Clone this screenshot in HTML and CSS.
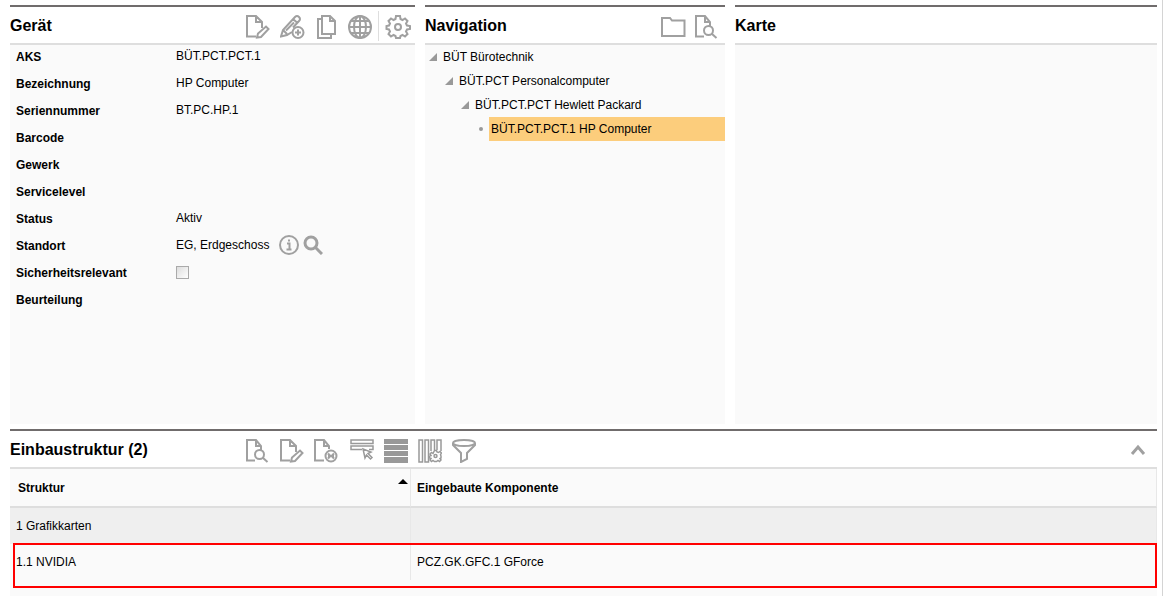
FILE: index.html
```html
<!DOCTYPE html>
<html lang="de">
<head>
    <meta charset="UTF-8">
    <meta name="viewport" content="width=device-width, initial-scale=1.0">
    <title>Gerät</title>
    <link rel="stylesheet" href="styles.css">
</head>
<body>
    <!-- Wiederverwendete Symbole -->
    <svg class="symbols" aria-hidden="true">
        <symbol id="page-search" viewBox="0 0 26 24">
            <path d="M9 21.500H1V1h9l5 6v4M10 1v6h5"/>
            <circle cx="13.500" cy="15.500" r="4.500"/>
            <path d="M16.500 18.500l5 4.500"/>
        </symbol>
        <symbol id="page-edit" viewBox="0 0 26 24">
            <path d="M10 21.500H1V1h9l6 6v6M10 1v6h6M11 22.500l1-4 8-7 2.500 2.500-7.500 8z"/>
        </symbol>
    </svg>

    <div class="page">
        <div class="panels">
            <section class="panel">
                <div class="panel-header">
                    <h2>Gerät</h2>
                    <div class="toolbar device-toolbar">
                        <button type="button" class="icon-button" aria-label="Bearbeiten"><svg><use href="#page-edit"/></svg></button>
                        <button type="button" class="icon-button" aria-label="Neu">
                            <svg viewBox="0 0 26 24"><path d="M12 17l-5 3-6 1.500L3 15 15 2q2-2 4 0t0 4l-6 6.500M3 15l4 4M13 4l4.500 4M14 7.500l-8 8"/><circle cx="18" cy="17.500" r="5.500"/><path d="M15 17.500h6M18 14.500v6"/></svg>
                        </button>
                        <button type="button" class="icon-button" aria-label="Kopieren">
                            <svg viewBox="0 0 26 24"><path d="M8 1h8l5 5v13H8zM16 1v5h5M7 4H4v19h13v-3"/></svg>
                        </button>
                        <button type="button" class="icon-button" aria-label="Web">
                            <svg viewBox="0 0 26 24"><circle cx="12" cy="12" r="11"/><ellipse cx="12" cy="12" rx="6" ry="11"/><path d="M12 1v22M1 12h22M3 6h18M3 18h18"/></svg>
                        </button>
                        <button type="button" class="icon-button settings" aria-label="Einstellungen">
                            <svg viewBox="0 0 26 24"><circle cx="13" cy="12" r="3"/><path d="M11 1h4l.5 3 2 1L20 3.500 22.500 6 21 8.500l1 2 3 .5v3l-3 .5-1 2 1.500 2.500L20 21.500 17.500 20l-2 1-.5 2h-4l-.5-2-2-1L6 21.500 3.500 19 5 16.500l-1-2-2.500-.5v-3l2.500-.5 1-2L3.500 6 6 3.500 8.500 5l2-1z"/></svg>
                        </button>
                    </div>
                </div>
                <div class="panel-body">
                    <div class="field"><span class="name">AKS</span><span>BÜT.PCT.PCT.1</span></div>
                    <div class="field"><span class="name">Bezeichnung</span><span>HP Computer</span></div>
                    <div class="field"><span class="name">Seriennummer</span><span>BT.PC.HP.1</span></div>
                    <div class="field"><span class="name">Barcode</span></div>
                    <div class="field"><span class="name">Gewerk</span></div>
                    <div class="field"><span class="name">Servicelevel</span></div>
                    <div class="field"><span class="name">Status</span><span>Aktiv</span></div>
                    <div class="field">
                        <span class="name">Standort</span>
                        <span class="location">EG, Erdgeschoss</span>
                        <button type="button" class="small-button" aria-label="Info">
                            <svg viewBox="0 0 20 20"><circle cx="10" cy="10" r="9"/><path d="M8 8.500h2.500V14M7.500 14.500h5M9 5.500h2"/></svg>
                        </button>
                        <button type="button" class="small-button" aria-label="Suchen">
                            <svg class="bold" viewBox="0 0 20 20"><circle cx="8" cy="8" r="6"/><path d="M12 12l7 7"/></svg>
                        </button>
                    </div>
                    <div class="field"><label class="name" for="safety">Sicherheitsrelevant</label><input type="checkbox" id="safety"></div>
                    <div class="field"><span class="name">Beurteilung</span></div>
                </div>
            </section>

            <section class="panel">
                <div class="panel-header">
                    <h2>Navigation</h2>
                    <div class="toolbar">
                        <button type="button" class="icon-button" aria-label="Ordner">
                            <svg viewBox="0 0 26 24"><path d="M1 3h8l2 2.500h12.500V21H1z"/></svg>
                        </button>
                        <button type="button" class="icon-button" aria-label="Anzeigen"><svg><use href="#page-search"/></svg></button>
                    </div>
                </div>
                <div class="panel-body">
                    <ul class="tree">
                        <li><div class="node"><span class="arrow"></span>BÜT Bürotechnik</div>
                            <ul>
                                <li><div class="node"><span class="arrow"></span>BÜT.PCT Personalcomputer</div>
                                    <ul>
                                        <li><div class="node"><span class="arrow"></span>BÜT.PCT.PCT Hewlett Packard</div>
                                            <ul>
                                                <li><div class="node"><span class="dot"></span><span class="selected">BÜT.PCT.PCT.1 HP Computer</span></div></li>
                                            </ul>
                                        </li>
                                    </ul>
                                </li>
                            </ul>
                        </li>
                    </ul>
                </div>
            </section>

            <section class="panel">
                <div class="panel-header"><h2>Karte</h2></div>
                <div class="panel-body"></div>
            </section>
        </div>

        <section class="panel structure">
            <div class="panel-header">
                <h2>Einbaustruktur (2)</h2>
                <div class="toolbar">
                    <button type="button" class="icon-button" aria-label="Anzeigen"><svg><use href="#page-search"/></svg></button>
                    <button type="button" class="icon-button" aria-label="Bearbeiten"><svg><use href="#page-edit"/></svg></button>
                    <button type="button" class="icon-button" aria-label="Entfernen">
                        <svg viewBox="0 0 26 24"><path d="M10 21.500H1V1h9l5 6v3M10 1v6h5"/><circle cx="17" cy="17" r="5.500"/><path d="M14 14.500l2 2M20 14.500l-2 2M14 19.500l2-2M20 19.500l-2-2M14 17h6"/></svg>
                    </button>
                    <button type="button" class="icon-button" aria-label="Auswählen">
                        <svg class="thin" viewBox="0 0 26 24"><path d="M3 1h22v3.500H3zM14 10.500H3V7h22v3.500h-4"/><path d="M15 10l8 3-3 1.500 4 4-1.500 1.500-4-4-1.500 3z"/></svg>
                    </button>
                    <button type="button" class="icon-button" aria-label="Zeilen">
                        <svg class="solid" viewBox="0 0 26 24"><path d="M2 0h24v5H2zM2 6h24v5H2zM2 12h24v5H2zM2 18h24v6H2z"/></svg>
                    </button>
                    <button type="button" class="icon-button" aria-label="Spalten">
                        <svg class="thin" viewBox="0 0 26 24"><path d="M3 1h3.500v22H3zM9 1h3.500v22H9zM15 12V1h3.500v10M21 11V1h4v11"/><circle cx="19.500" cy="17" r="1.500"/><path d="M18.500 11.500h2l.5 1.500 1.500.5 1.500-1 1.500 1.500-1 1.500.5 1.500v2l-1 .5 1 1.500-1.500 1.500-1.500-1-1.500 1h-2l-1.500-1-1.500 1-1.500-1.500 1-1.500-1.500-.5v-2l1.500-.5-1-1.500 1.500-1.500 1.500 1z"/></svg>
                    </button>
                    <button type="button" class="icon-button" aria-label="Filter">
                        <svg viewBox="0 0 26 24"><ellipse cx="14" cy="4" rx="11" ry="3"/><path d="M3 4v2l8 8v9l6-3v-6l8-8V4"/></svg>
                    </button>
                </div>
                <button type="button" class="collapse" aria-label="Einklappen">
                    <svg viewBox="0 0 16 12"><path d="M2 10l6-7 6 7"/></svg>
                </button>
            </div>
            <table>
                <thead>
                    <tr>
                        <th class="first"><div class="sortable">Struktur<span class="sort"></span></div></th>
                        <th>Eingebaute Komponente</th>
                    </tr>
                </thead>
                <tbody>
                    <tr class="group"><td>1 Grafikkarten</td><td></td></tr>
                    <tr class="marked"><td>1.1 NVIDIA<span class="marker"></span></td><td>PCZ.GK.GFC.1 GForce</td></tr>
                </tbody>
            </table>
        </section>
    </div>
</body>
</html>
```
FILE: styles.css
```css
* {
    box-sizing: border-box;
}

body {
    margin: 0;
    font-family: "Liberation Sans", Arial, sans-serif;
    font-size: 12px;
    color: #000;
    background-color: #fff;
}

.page {
    min-height: 100vh;
    display: flex;
    flex-direction: column;
    padding: 5px 5px 0 10px;
    border-right: 1px solid #d4d4d4;
}

.symbols {
    display: none;
}

.panels {
    display: grid;
    grid-template-columns: 405px 300px 1fr;
    gap: 10px;
    min-height: 419px;
    margin-bottom: 5px;
}

.panel {
    display: flex;
    flex-direction: column;
    border-top: 2px solid #706c6c;
}

.panel-header {
    display: flex;
    align-items: center;
    height: 38px;
    padding-top: 2px;
    border-bottom: 2px solid #dedede;
}

.panel-body {
    flex: 1;
    background-color: #fafafa;
}

h2 {
    margin: 0;
    font-size: 16px;
    line-height: 20px;
}

/* Symbolleisten */
.toolbar {
    display: flex;
    gap: 8px;
    margin-left: auto;
    padding-top: 2px;
    padding-right: 4px;
}

button {
    display: block;
    padding: 0;
    border: 0;
    background: none;
    cursor: pointer;
}

.icon-button,
.icon-button svg {
    width: 26px;
    height: 24px;
}

svg {
    display: block;
    fill: none;
    stroke: #a0a0a0;
    stroke-width: 2;
}

svg.solid {
    fill: #999;
    stroke: none;
}

svg.thin {
    stroke: #999;
    stroke-width: 1.5;
}

svg.bold {
    stroke-width: 3;
}

.device-toolbar {
    padding-right: 4px;
}

.settings {
    position: relative;
    margin-left: 3px;
}

.settings::before {
    content: "";
    position: absolute;
    left: -7px;
    top: -4px;
    width: 1px;
    height: 30px;
    background-color: #dedede;
}

/* Gerätedaten */
.field {
    display: flex;
    align-items: center;
    height: 27px;
    padding: 0 6px 5px;
}

.name {
    width: 160px;
    padding-top: 2px;
    font-weight: bold;
}

.location {
    margin-right: 10px;
}

.small-button {
    margin-right: 4px;
}

.small-button svg {
    width: 20px;
    height: 20px;
}

input[type="checkbox"] {
    appearance: none;
    width: 13px;
    height: 13px;
    margin: 0;
    border: 1px solid #aaa;
    background: linear-gradient(135deg, #ddd, #fff);
}

/* Baum */
.tree,
.tree ul {
    margin: 0;
    padding: 0;
    list-style: none;
}

.tree ul {
    padding-left: 16px;
}

.node {
    display: flex;
    align-items: center;
    height: 24px;
    padding-left: 4px;
}

.arrow {
    width: 8px;
    height: 8px;
    margin-right: 6px;
    background-color: #999;
    clip-path: polygon(100% 0, 100% 100%, 0 100%);
}

.dot {
    width: 4px;
    height: 4px;
    margin: 0 6px 0 2px;
    border-radius: 50%;
    background-color: #999;
}

.selected {
    flex: 1;
    padding-left: 2px;
    line-height: 24px;
    background-color: #fccd7c;
}

/* Einbaustruktur */
.structure {
    flex: 1;
    background-color: #fafafa;
}

.structure .panel-header {
    background-color: #fff;
}

.structure h2 {
    width: 236px;
}

.structure .toolbar {
    margin-left: 0;
}

.collapse {
    margin-left: auto;
    margin-right: 11px;
}

.collapse svg {
    width: 16px;
    height: 12px;
    stroke-width: 3;
}

table {
    width: 100%;
    border-collapse: separate;
    border-spacing: 0;
    table-layout: fixed;
}

th,
td {
    padding: 0 6px;
    text-align: left;
    border-right: 1px solid #e8e8e8;
}

th {
    height: 39px;
    border-bottom: 2px solid #dedede;
}

th.first {
    width: 401px;
    padding: 0 2px 0 8px;
}

.sortable {
    display: flex;
    justify-content: space-between;
}

.sort {
    height: 5px;
    margin-top: -2px;
    border: solid transparent;
    border-width: 0 5px 5px;
    border-bottom-color: #000;
}

td {
    height: 36px;
}

.group td {
    background-color: #efefef;
}

/* Rote Markierung der Komponente */
.marked {
    position: relative;
}

.marker {
    position: absolute;
    left: 3px;
    right: 0;
    top: -1px;
    height: 45px;
    border: 2px solid #f00;
}
```
